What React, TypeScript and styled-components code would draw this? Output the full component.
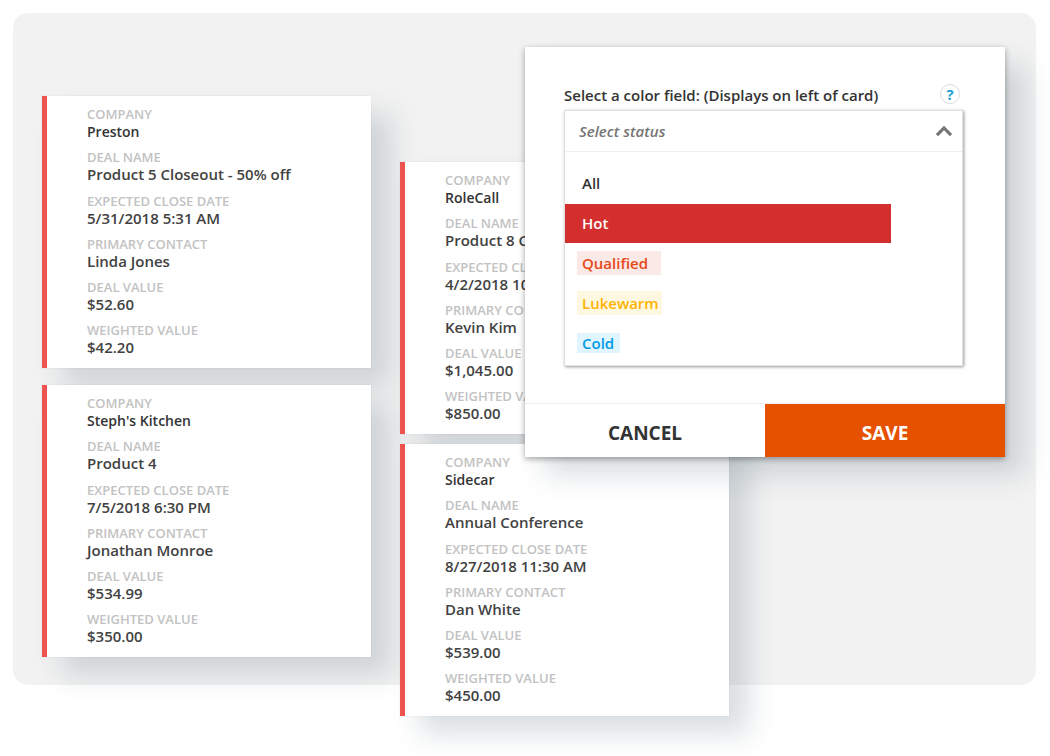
import React, { useState } from "react";
import styled, { createGlobalStyle } from "styled-components";

const GlobalStyle = createGlobalStyle`
  *, *::before, *::after { box-sizing: border-box; }
  body {
    margin: 0;
    background: #fff;
    color: #333;
    font-family: "Open Sans", "Noto Sans", sans-serif;
    font-weight: 600;
  }
  button, select { font: inherit; color: inherit; }
`;

const Page = styled.main`
  padding: 13px 14px 70px 13px;
`;

const Board = styled.section`
  position: relative;
  display: flex;
  align-items: flex-start;
  gap: 29px;
  padding: 83px 29px 28px;
  border-radius: 15px;
  background: #f2f2f2;
`;

const Column = styled.div<{ $lowered?: boolean }>`
  flex: 0 1 329px;
  display: flex;
  flex-direction: column;
  gap: ${(p) => (p.$lowered ? 10 : 17)}px;
  margin: ${(p) => (p.$lowered ? "66px 0 -59px" : "0")};
`;

const CardBox = styled.article`
  display: flex;
  flex-direction: column;
  gap: 9px;
  padding: 10px 16px 11px 40px;
  border-left: 5px solid #ef5350;
  background: #fff;
  box-shadow:
    0 0 1px rgba(0, 0, 0, 0.15),
    20px 18px 26px rgba(38, 65, 82, 0.17);
`;

const FieldGroup = styled.dl`
  display: flex;
  flex-direction: column;
  gap: 8px;
  margin: 0;
`;

const FieldName = styled.dt`
  font-size: 13px;
  line-height: 17px;
  color: #c2c2c2;
  text-transform: uppercase;
  white-space: nowrap;
`;

const FieldValue = styled.dd<{ $small?: boolean }>`
  margin: 0;
  padding-bottom: ${(p) => (p.$small ? 0 : 2)}px;
  font-size: ${(p) => (p.$small ? 14 : 15)}px;
  line-height: ${(p) => (p.$small ? 18 : 16)}px;
  color: ${(p) => (p.$small ? "#333" : "#424242")};
  white-space: nowrap;
`;

const Dialog = styled.form`
  position: absolute;
  top: 34px;
  right: 31px;
  width: 480px;
  background: #fff;
  box-shadow:
    0 2px 6px rgba(0, 0, 0, 0.35),
    20px 18px 26px rgba(38, 65, 82, 0.17);
`;

const DialogBody = styled.div`
  padding: 37px 42px 37px 39px;
`;

const DialogHeader = styled.div`
  display: flex;
  justify-content: space-between;
  height: 26px;
  padding-right: 3px;
`;

const DialogLabel = styled.label`
  font-size: 15px;
  line-height: 22px;
`;

const HelpButton = styled.button`
  width: 20px;
  height: 20px;
  padding: 0;
  border: 1px solid #dcdcdc;
  border-radius: 50%;
  background: #fff;
  color: #1a9fd3;
  font-size: 15px;
  line-height: 18px;
  font-weight: 700;
`;

const Dropdown = styled.div`
  border: 1px solid #e0e0e0;
  background: #fff;
  box-shadow: 1px 1px 3px rgba(0, 0, 0, 0.4);
`;

const SelectRow = styled.div`
  display: grid;
  align-items: center;
  border-bottom: 1px solid #eee;

  & > * { grid-area: 1 / 1; }
  & > svg { justify-self: end; margin-right: 9px; pointer-events: none; }
`;

const StatusSelect = styled.select`
  appearance: none;
  width: 100%;
  height: 40px;
  padding: 0 40px 0 14px;
  border: 0;
  background: transparent;
  color: #757575;
  font-size: 15px;
  font-style: italic;
  outline: none;
`;

const OptionList = styled.div`
  display: flex;
  flex-direction: column;
  gap: 1px;
  padding: 12px 71px 2px 0;
`;

const OptionRow = styled.button<{ $active: boolean }>`
  display: flex;
  align-items: center;
  height: 39px;
  padding: 0 12px 2px;
  border: 0;
  background: ${(p) => (p.$active ? "#d32f2f" : "transparent")};
  color: ${(p) => (p.$active ? "#fff" : "#333")};
  font-size: 15px;
  text-align: left;
`;

const Chip = styled.span<{ $ink?: string; $fill?: string; $width?: number; $height?: number }>`
  width: ${(p) => (p.$width ? `${p.$width}px` : "auto")};
  padding-left: 5px;
  background: ${(p) => p.$fill ?? "transparent"};
  color: ${(p) => p.$ink ?? "inherit"};
  line-height: ${(p) => p.$height ?? 24}px;
  white-space: nowrap;
`;

const DialogFooter = styled.div`
  display: grid;
  grid-template-columns: 1fr 1fr;
  border-top: 1px solid #eee;
`;

const ActionButton = styled.button<{ $primary?: boolean }>`
  height: 53px;
  padding: 4px 0 0;
  border: 0;
  background: ${(p) => (p.$primary ? "#e65100" : "#fff")};
  color: ${(p) => (p.$primary ? "#fff" : "#333")};
  font-size: 19px;
  font-weight: 700;
`;

interface Deal {
  company: string;
  name: string;
  closeDate: string;
  contact: string;
  value: string;
  weighted: string;
}

const leftDeals: Deal[] = [
  { company: "Preston", name: "Product 5 Closeout - 50% off", closeDate: "5/31/2018 5:31 AM", contact: "Linda Jones", value: "$52.60", weighted: "$42.20" },
  { company: "Steph's Kitchen", name: "Product 4", closeDate: "7/5/2018 6:30 PM", contact: "Jonathan Monroe", value: "$534.99", weighted: "$350.00" },
];

const rightDeals: Deal[] = [
  { company: "RoleCall", name: "Product 8 Closeout", closeDate: "4/2/2018 10:30 AM", contact: "Kevin Kim", value: "$1,045.00", weighted: "$850.00" },
  { company: "Sidecar", name: "Annual Conference", closeDate: "8/27/2018 11:30 AM", contact: "Dan White", value: "$539.00", weighted: "$450.00" },
];

const statuses: { label: string; ink?: string; fill?: string; width?: number; height?: number }[] = [
  { label: "All" },
  { label: "Hot" },
  { label: "Qualified", ink: "#e64a19", fill: "#fbe9e7", width: 84 },
  { label: "Lukewarm", ink: "#ffb300", fill: "#fff8e1", width: 85 },
  { label: "Cold", ink: "#039be5", fill: "#e1f5fe", width: 43, height: 20 },
];

function Field({ name, value, small }: { name: string; value: string; small?: boolean }) {
  return (
    <div>
      <FieldName>{name}</FieldName>
      <FieldValue $small={small}>{value}</FieldValue>
    </div>
  );
}

function DealCard({ deal }: { deal: Deal }) {
  return (
    <CardBox>
      <FieldGroup>
        <Field name="Company" value={deal.company} small />
        <Field name="Deal name" value={deal.name} />
      </FieldGroup>
      <FieldGroup>
        <Field name="Expected close date" value={deal.closeDate} />
        <Field name="Primary contact" value={deal.contact} />
        <Field name="Deal value" value={deal.value} />
        <Field name="Weighted value" value={deal.weighted} />
      </FieldGroup>
    </CardBox>
  );
}

function ColorFieldDialog() {
  const [status, setStatus] = useState("");
  const [active, setActive] = useState("Hot");

  return (
    <Dialog role="dialog" aria-label="Card color" onSubmit={(e) => e.preventDefault()}>
      <DialogBody>
        <DialogHeader>
          <DialogLabel htmlFor="status">Select a color field: (Displays on left of card)</DialogLabel>
          <HelpButton type="button" aria-label="Help">?</HelpButton>
        </DialogHeader>
        <Dropdown>
          <SelectRow>
            <StatusSelect id="status" value={status} onChange={(e) => setStatus(e.target.value)}>
              <option value="">Select status</option>
              {statuses.map((s) => (
                <option key={s.label}>{s.label}</option>
              ))}
            </StatusSelect>
            <svg width="18" height="12" viewBox="0 0 18 12" aria-hidden="true">
              <path d="M2 10.2 9 3l7 7.2" fill="none" stroke="#757575" strokeWidth="3.2" />
            </svg>
          </SelectRow>
          <OptionList role="listbox" aria-label="Status">
            {statuses.map((s) => (
              <OptionRow
                key={s.label}
                type="button"
                role="option"
                aria-selected={active === s.label}
                $active={active === s.label}
                onMouseEnter={() => setActive(s.label)}
                onClick={() => setStatus(s.label)}
              >
                <Chip $ink={s.ink} $fill={s.fill} $width={s.width} $height={s.height}>{s.label}</Chip>
              </OptionRow>
            ))}
          </OptionList>
        </Dropdown>
      </DialogBody>
      <DialogFooter>
        <ActionButton type="button">CANCEL</ActionButton>
        <ActionButton type="submit" $primary>SAVE</ActionButton>
      </DialogFooter>
    </Dialog>
  );
}

export default function App() {
  return (
    <>
      <GlobalStyle />
      <Page>
        <Board>
          <Column>
            {leftDeals.map((d) => <DealCard key={d.company} deal={d} />)}
          </Column>
          <Column $lowered>
            {rightDeals.map((d) => <DealCard key={d.company} deal={d} />)}
          </Column>
          <ColorFieldDialog />
        </Board>
      </Page>
    </>
  );
}
